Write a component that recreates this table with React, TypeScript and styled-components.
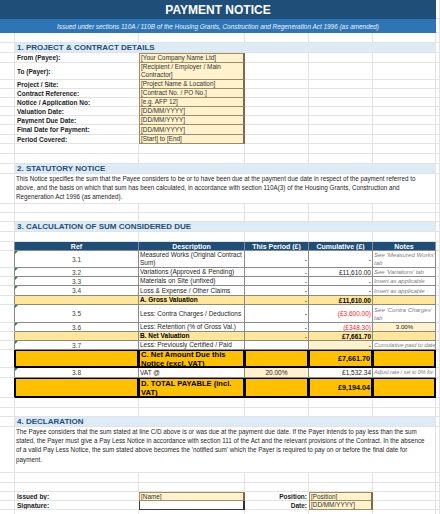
import styled, { createGlobalStyle, css } from "styled-components"

const GlobalStyle = createGlobalStyle`
  html, body {
    margin: 0;
    padding: 0;
    background: #fff;
  }
  body {
    font-family: "Liberation Sans", Arial, sans-serif;
    color: #222;
  }
`

const COLS = "15px 124px 106px 64px 64px 63px 4px"
const GRID = "#e3e3e3"
const EDGE = "#8a8a8a"

type Tone = "plain" | "sub" | "total"
const toneBg: Record<Tone, string> = { plain: "#fff", sub: "#ffe699", total: "#ffc000" }

const Sheet = styled.div`
  width: 440px;
  display: flex;
  flex-direction: column;
`

const Row = styled.div<{ $h: number }>`
  display: grid;
  grid-template-columns: ${COLS};
  height: ${p => p.$h}px;
  flex: none;
`

const Cell = styled.div<{ $right?: string; $bottom?: string }>`
  box-sizing: border-box;
  min-width: 0;
  overflow: hidden;
  display: flex;
  align-items: center;
  border-right: 1px solid ${p => p.$right ?? GRID};
  border-bottom: 1px solid ${p => p.$bottom ?? GRID};
`

const TitleBar = styled.div`
  grid-column: 1 / 7;
  background: #1f4e79;
  color: #fff;
  font-weight: bold;
  font-size: 12px;
  display: flex;
  align-items: center;
  justify-content: center;
`

const SubBar = styled(TitleBar)`
  background: #2e75b6;
  font-weight: normal;
  font-style: italic;
  font-size: 6.4px;
  color: #eef4fa;
`

const Band = styled(Cell)`
  grid-column: 2 / 7;
  background: #ddebf7;
  color: #1f4e79;
  font-weight: bold;
  font-size: 8px;
  padding-left: 2px;
`

const Para = styled(Cell)`
  grid-column: 2 / 7;
  display: block;
  padding: 0 0 0 1px;
  font-size: 6.3px;
  line-height: 9.2px;
  color: #262626;
`

const Line = styled.span`
  display: block;
  white-space: nowrap;
`

const Label = styled(Cell)<{ $end?: boolean }>`
  border-right: none;
  font-weight: bold;
  font-size: 6.5px;
  color: #1a1a1a;
  padding: 0 2px;
  white-space: nowrap;
  justify-content: ${p => (p.$end ? "flex-end" : "flex-start")};
`

const Field = styled.div<{ $top?: boolean; $blank?: boolean }>`
  box-sizing: border-box;
  min-width: 0;
  overflow: hidden;
  display: flex;
  align-items: center;
  padding: 0 1px;
  background: ${p => (p.$blank ? "#fff" : "#fff2cc")};
  border: 1px solid ${p => (p.$blank ? "#404040" : "#9a8d68")};
  border-top: ${p => (p.$top ? "1px solid #9a8d68" : "none")};
  border-right: 2px solid ${p => (p.$blank ? "#303030" : "#7a6b44")};
  font-size: 6.4px;
  line-height: 8px;
  color: #333;
`

const Head = styled(Cell)`
  background: #1f4e79;
  color: #fff;
  font-weight: bold;
  font-size: 7px;
  justify-content: center;
  border-right-color: ${EDGE};
  border-bottom-color: ${EDGE};
  white-space: nowrap;
`

const TCell = styled(Cell)<{ $tone: Tone; $fill?: string }>`
  background: ${p => p.$fill ?? toneBg[p.$tone]};
  border-right-color: ${p => (p.$tone === "total" ? "#000" : EDGE)};
  border-bottom-color: ${p => (p.$tone === "total" ? "#000" : EDGE)};
  ${p => p.$tone === "total" && css`box-shadow: inset 0 0 0 1px #000;`}
  font-size: 6.5px;
  color: #262626;
  padding: 0 1px;
`

const RefCell = styled(TCell)<{ $flag?: boolean }>`
  justify-content: center;
  position: relative;
  color: #404040;
  ${p =>
    p.$flag &&
    css`
      &::before {
        content: "";
        position: absolute;
        top: 0;
        left: 0;
        border-top: 3px solid #1e8c3a;
        border-right: 3px solid transparent;
      }
    `}
`

const DescCell = styled(TCell)<{ $strong?: boolean }>`
  line-height: 8px;
  ${p =>
    p.$strong &&
    css`
      font-weight: bold;
      color: #000;
    `}
  ${p =>
    p.$tone === "total" &&
    css`
      font-size: 7.6px;
      line-height: 9px;
      padding-left: 2px;
    `}
`

const NumCell = styled(TCell)<{ $red?: boolean; $strong?: boolean; $mid?: boolean }>`
  justify-content: ${p => (p.$mid ? "center" : "flex-end")};
  white-space: nowrap;
  color: ${p => (p.$red ? "#ff1a1a" : "#1a1a1a")};
  ${p =>
    p.$strong &&
    css`
      font-weight: bold;
      color: #000;
    `}
  ${p =>
    p.$tone === "total" &&
    css`
      font-size: 7.2px;
      padding-right: 2px;
    `}
`

const NoteCell = styled(TCell)<{ $input?: boolean; $wrap?: boolean; $small?: boolean }>`
  font-style: ${p => (p.$input ? "normal" : "italic")};
  color: ${p => (p.$input ? "#1a1a1a" : "#7f7f7f")};
  justify-content: ${p => (p.$input ? "center" : "flex-start")};
  font-size: ${p => (p.$small ? "5.5px" : "6.1px")};
  line-height: 7.6px;
  padding: 0 0 0 1px;
  white-space: ${p => (p.$wrap ? "normal" : "nowrap")};
  letter-spacing: ${p => (p.$wrap || p.$input ? "0" : "-0.1px")};
`

type Detail = { label: string; value: string; h: number }

const details: Detail[] = [
  { label: "From (Payee):", value: "[Your Company Name Ltd]", h: 10 },
  { label: "To (Payer):", value: "[Recipient / Employer / Main Contractor]", h: 17 },
  { label: "Project / Site:", value: "[Project Name & Location]", h: 9 },
  { label: "Contract Reference:", value: "[Contract No. / PO No.]", h: 9 },
  { label: "Notice / Application No:", value: "[e.g. AFP 12]", h: 9 },
  { label: "Valuation Date:", value: "[DD/MM/YYYY]", h: 9 },
  { label: "Payment Due Date:", value: "[DD/MM/YYYY]", h: 9 },
  { label: "Final Date for Payment:", value: "[DD/MM/YYYY]", h: 10 },
  { label: "Period Covered:", value: "[Start] to [End]", h: 9 },
]

type Line3 = {
  tone: Tone
  h: number
  ref?: string
  desc: string
  period?: string
  periodInput?: boolean
  cum?: string
  cumInput?: boolean
  red?: boolean
  note?: string
  noteInput?: boolean
  noteSmall?: boolean
}

const calc: Line3[] = [
  { tone: "plain", h: 17, ref: "3.1", desc: "Measured Works (Original Contract Sum)", period: "-", cum: "-", note: "See 'Measured Works' tab" },
  { tone: "plain", h: 9, ref: "3.2", desc: "Variations (Approved & Pending)", period: "-", cum: "£11,610.00", note: "See 'Variations' tab" },
  { tone: "plain", h: 9, ref: "3.3", desc: "Materials on Site (unfixed)", period: "-", cum: "-", note: "Insert as applicable" },
  { tone: "plain", h: 10, ref: "3.4", desc: "Loss & Expense / Other Claims", period: "-", cum: "-", note: "Insert as applicable" },
  { tone: "sub", h: 9, desc: "A. Gross Valuation", period: "-", cum: "£11,610.00" },
  { tone: "plain", h: 18, ref: "3.5", desc: "Less: Contra Charges / Deductions", period: "-", cum: "(£3,600.00)", red: true, note: "See 'Contra Charges' tab" },
  { tone: "plain", h: 9, ref: "3.6", desc: "Less: Retention (% of Gross Val.)", period: "-", cum: "(£348.30)", red: true, note: "3.00%", noteInput: true },
  { tone: "sub", h: 9, desc: "B. Net Valuation", period: "-", cum: "£7,661.70" },
  { tone: "plain", h: 9, ref: "3.7", desc: "Less: Previously Certified / Paid", cum: "-", cumInput: true, note: "Cumulative paid to date" },
  { tone: "total", h: 18, desc: "C. Net Amount Due this Notice (excl. VAT)", cum: "£7,661.70" },
  { tone: "plain", h: 10, ref: "3.8", desc: "VAT @", period: "20.00%", periodInput: true, cum: "£1,532.34", note: "Adjust rate / set to 0% for", noteSmall: true },
  { tone: "total", h: 20, desc: "D. TOTAL PAYABLE (incl. VAT)", cum: "£9,194.04" },
]

const INPUT = "#fff2cc"

function Blank({ h }: { h: number }) {
  return (
    <Row $h={h}>
      {Array.from({ length: 7 }).map((_, i) => (
        <Cell key={i} />
      ))}
    </Row>
  )
}

function App() {
  return (
    <>
      <GlobalStyle />
      <Sheet>
        <Row $h={19}>
          <TitleBar>PAYMENT NOTICE</TitleBar>
          <Cell />
        </Row>
        <Row $h={14}>
          <SubBar>
            Issued under sections 110A / 110B of the Housing Grants, Construction and Regeneration Act 1996 (as amended)
          </SubBar>
          <Cell />
        </Row>
        <Blank h={10} />

        <Row $h={10}>
          <Cell />
          <Band>1. PROJECT &amp; CONTRACT DETAILS</Band>
          <Cell />
        </Row>
        {details.map((d, i) => (
          <Row $h={d.h} key={d.label}>
            <Cell />
            <Label>{d.label}</Label>
            <Field $top={i === 0}>{d.value}</Field>
            <Cell />
            <Cell />
            <Cell />
            <Cell />
          </Row>
        ))}
        <Blank h={10} />
        <Blank h={10} />

        <Row $h={10}>
          <Cell />
          <Band>2. STATUTORY NOTICE</Band>
          <Cell />
        </Row>
        <Row $h={30}>
          <Cell />
          <Para>
            <Line>
              This Notice specifies the sum that the Payee considers to be or to have been due at the payment due date in respect of the payment referred to
            </Line>
            <Line>
              above, and the basis on which that sum has been calculated, in accordance with section 110A(3) of the Housing Grants, Construction and
            </Line>
            <Line>Regeneration Act 1996 (as amended).</Line>
          </Para>
          <Cell />
        </Row>
        <Blank h={9} />
        <Blank h={9} />

        <Row $h={10}>
          <Cell />
          <Band>3. CALCULATION OF SUM CONSIDERED DUE</Band>
          <Cell />
        </Row>
        <Blank h={10} />
        <Row $h={9}>
          <Cell $right={EDGE} />
          <Head>Ref</Head>
          <Head>Description</Head>
          <Head>This Period (£)</Head>
          <Head>Cumulative (£)</Head>
          <Head>Notes</Head>
          <Cell />
        </Row>
        {calc.map((r, i) => (
          <Row $h={r.h} key={i}>
            <Cell $right={r.tone === "total" ? "#000" : EDGE} />
            <RefCell $tone={r.tone} $flag={!!r.ref}>
              {r.ref}
            </RefCell>
            <DescCell $tone={r.tone} $strong={r.tone !== "plain"}>
              {r.desc}
            </DescCell>
            <NumCell $tone={r.tone} $fill={r.periodInput ? INPUT : undefined} $mid={r.periodInput}>
              {r.period}
            </NumCell>
            <NumCell $tone={r.tone} $fill={r.cumInput ? INPUT : undefined} $red={r.red} $strong={r.tone !== "plain"}>
              {r.cum}
            </NumCell>
            <NoteCell
              $tone={r.tone}
              $fill={r.noteInput ? INPUT : undefined}
              $input={r.noteInput}
              $wrap={r.h > 15}
              $small={r.noteSmall}
            >
              {r.note}
            </NoteCell>
            <Cell />
          </Row>
        ))}
        <Blank h={10} />
        <Blank h={9} />

        <Row $h={10}>
          <Cell />
          <Band>4. DECLARATION</Band>
          <Cell />
        </Row>
        <Row $h={46}>
          <Cell />
          <Para>
            <Line>
              The Payee considers that the sum stated at line C/D above is or was due at the payment due date. If the Payer intends to pay less than the sum
            </Line>
            <Line>
              stated, the Payer must give a Pay Less Notice in accordance with section 111 of the Act and the relevant provisions of the Contract. In the absence
            </Line>
            <Line>
              of a valid Pay Less Notice, the sum stated above becomes the 'notified sum' which the Payer is required to pay on or before the final date for
            </Line>
            <Line>payment.</Line>
          </Para>
          <Cell />
        </Row>
        <Blank h={10} />
        <Blank h={9} />
        <Row $h={9}>
          <Cell />
          <Label>Issued by:</Label>
          <Field $top>[Name]</Field>
          <Label $end>Position:</Label>
          <Field $top>[Position]</Field>
          <Cell />
          <Cell />
        </Row>
        <Row $h={9}>
          <Cell />
          <Label>Signature:</Label>
          <Field $blank />
          <Label $end>Date:</Label>
          <Field>[DD/MM/YYYY]</Field>
          <Cell />
          <Cell />
        </Row>
        <Blank h={9} />
      </Sheet>
    </>
  )
}

export default App
